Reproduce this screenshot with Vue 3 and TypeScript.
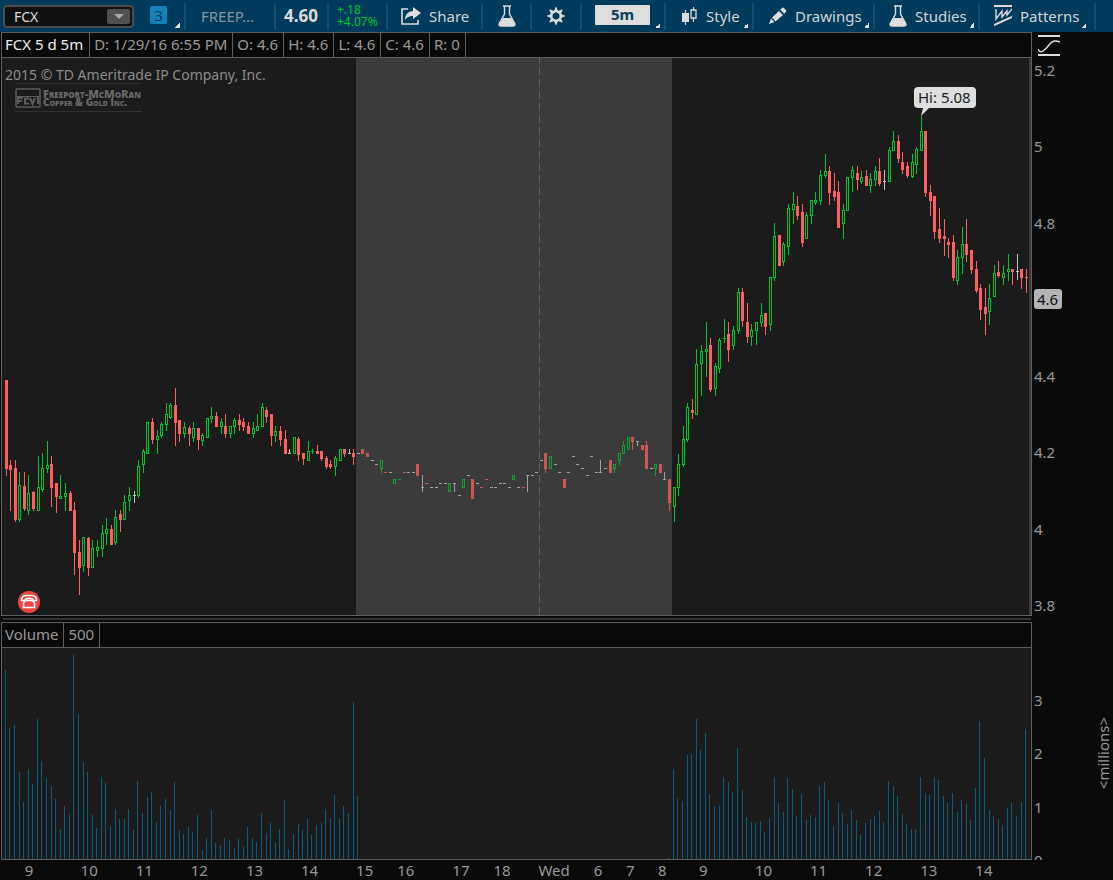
<script setup lang="ts">
import { ref } from 'vue'

type Kind = 'up' | 'down' | 'flat'
type Row = [number, string, number, number, number, number]

const symbol = ref('FCX')

const priceInfo = ['D: 1/29/16 6:55 PM', 'O: 4.6', 'H: 4.6', 'L: 4.6', 'C: 4.6', 'R: 0']
const priceTicks = ['5.2', '5', '4.8', '4.6', '4.4', '4.2', '4', '3.8']
const volumeTicks = ['3', '2', '1', '0']

const plot = { x: 2, width: 1029, priceY: 58, priceHeight: 557, volumeY: 648, volumeHeight: 211 }
const afterHours = { from: 356, to: 672 }

const timeTicks: [string, number][] = [
  ['9', 30], ['10', 90], ['11', 145], ['12', 200], ['13', 255], ['14', 310], ['15', 365],
  ['16', 406], ['17', 461], ['18', 502], ['Wed', 554], ['6', 598], ['7', 630], ['8', 662],
  ['9', 703], ['10', 763], ['11', 818], ['12', 873], ['13', 928], ['14', 983],
]

// x, kind, high, body top, body bottom, low (plot units)
const rows: Row[] = [
  [6, 'R', 380, 380, 469, 476], [10, 'R', 460, 465, 470, 511], [15, 'R', 460, 468, 520, 522],
  [19, 'G', 472, 485, 520, 522], [24, 'R', 472, 486, 509, 511], [28, 'G', 475, 493, 511, 515],
  [33, 'R', 491, 492, 509, 511], [38, 'G', 456, 487, 511, 511], [42, 'G', 453, 468, 490, 492],
  [47, 'G', 441, 465, 469, 473], [51, 'R', 456, 464, 488, 507], [56, 'R', 483, 483, 497, 513],
  [60, 'G', 475, 496, 499, 499], [65, 'G', 483, 493, 497, 511], [70, 'R', 491, 493, 511, 511],
  [74, 'R', 502, 510, 553, 575], [79, 'R', 540, 552, 568, 595], [83, 'G', 537, 537, 566, 572],
  [88, 'R', 537, 538, 568, 576], [92, 'G', 540, 548, 568, 568], [97, 'G', 540, 547, 551, 557],
  [102, 'G', 525, 533, 549, 557], [106, 'G', 518, 529, 534, 545], [111, 'R', 525, 529, 545, 545],
  [115, 'G', 510, 517, 543, 545], [120, 'R', 510, 514, 520, 532], [124, 'G', 495, 502, 520, 520],
  [129, 'G', 487, 495, 501, 511], [134, 'W', 491, 495, 496, 503], [138, 'G', 460, 466, 496, 498],
  [143, 'G', 449, 451, 465, 473], [147, 'G', 422, 422, 454, 454], [152, 'R', 418, 422, 440, 444],
  [157, 'G', 430, 436, 440, 454], [161, 'G', 422, 424, 436, 438], [166, 'G', 403, 414, 425, 431],
  [170, 'G', 403, 405, 418, 419], [175, 'R', 388, 405, 423, 446], [179, 'R', 420, 420, 434, 442],
  [184, 'G', 422, 427, 434, 438], [189, 'R', 426, 428, 434, 446], [193, 'G', 422, 428, 438, 442],
  [198, 'R', 428, 428, 440, 450], [202, 'G', 433, 435, 441, 446], [207, 'G', 418, 418, 438, 438],
  [211, 'G', 407, 416, 419, 423], [216, 'R', 412, 416, 427, 427], [221, 'G', 418, 422, 427, 434],
  [225, 'R', 414, 426, 434, 438], [230, 'G', 426, 426, 434, 438], [234, 'G', 418, 420, 427, 434],
  [239, 'R', 414, 420, 425, 431], [243, 'R', 418, 422, 427, 431], [248, 'R', 422, 426, 434, 434],
  [253, 'G', 422, 428, 434, 438], [257, 'G', 414, 426, 431, 431], [262, 'G', 403, 407, 427, 427],
  [266, 'R', 407, 410, 417, 423], [271, 'R', 414, 414, 436, 446], [275, 'G', 426, 431, 436, 442],
  [280, 'R', 426, 431, 440, 446], [285, 'R', 430, 439, 454, 454], [289, 'W', 449, 453, 454, 454],
  [294, 'G', 437, 437, 454, 454], [298, 'R', 437, 439, 455, 461], [303, 'R', 453, 453, 459, 465],
  [308, 'G', 441, 451, 461, 461], [312, 'G', 449, 451, 452, 454], [317, 'R', 445, 451, 454, 454],
  [321, 'R', 451, 451, 459, 461], [326, 'R', 456, 458, 467, 469], [330, 'R', 460, 464, 467, 469],
  [335, 'G', 456, 458, 467, 476], [340, 'G', 449, 449, 461, 461], [344, 'R', 449, 449, 454, 457],
  [349, 'W', 449, 453, 454, 454], [353, 'R', 449, 453, 457, 465], [362, 'R', 449, 449, 454, 454],
  [367, 'R', 453, 453, 457, 457], [381, 'G', 460, 460, 469, 473], [394, 'G', 479, 479, 484, 484],
  [417, 'R', 464, 464, 476, 476], [422, 'W', 475, 487, 488, 492], [449, 'G', 483, 483, 492, 492],
  [454, 'W', 483, 483, 484, 492], [463, 'G', 479, 479, 488, 488], [472, 'R', 479, 479, 499, 499],
  [513, 'G', 475, 475, 480, 480], [527, 'W', 475, 475, 476, 492], [545, 'R', 453, 453, 469, 473],
  [550, 'G', 456, 456, 469, 469], [564, 'R', 479, 479, 488, 488], [600, 'W', 460, 472, 473, 473],
  [610, 'R', 460, 460, 473, 473], [614, 'G', 464, 464, 469, 473], [619, 'G', 453, 453, 461, 465],
  [623, 'G', 441, 445, 454, 454], [628, 'G', 437, 437, 450, 450], [632, 'R', 437, 437, 442, 450],
  [637, 'W', 441, 441, 442, 446], [642, 'R', 445, 445, 450, 450], [646, 'R', 441, 445, 469, 469],
  [655, 'G', 464, 464, 469, 476], [660, 'R', 464, 464, 473, 473], [664, 'W', 472, 479, 480, 480],
  [669, 'R', 479, 479, 503, 511], [674, 'G', 487, 487, 507, 522], [678, 'G', 454, 464, 488, 496],
  [683, 'G', 426, 439, 465, 467], [687, 'G', 403, 407, 440, 442], [692, 'R', 399, 410, 413, 419],
  [696, 'G', 349, 364, 415, 415], [701, 'G', 345, 351, 364, 396], [706, 'G', 322, 349, 352, 377],
  [710, 'R', 338, 345, 390, 392], [715, 'G', 363, 366, 389, 396], [719, 'G', 338, 340, 369, 373],
  [724, 'G', 319, 338, 339, 343], [728, 'R', 322, 334, 350, 362], [733, 'G', 326, 330, 346, 350],
  [738, 'G', 288, 292, 331, 334], [742, 'R', 288, 292, 321, 327], [747, 'R', 303, 322, 337, 343],
  [751, 'G', 324, 330, 337, 346], [756, 'G', 322, 322, 331, 345], [761, 'G', 303, 315, 323, 327],
  [765, 'R', 313, 313, 327, 335], [770, 'G', 277, 277, 325, 331], [774, 'G', 223, 236, 278, 281],
  [779, 'R', 235, 235, 266, 266], [783, 'G', 242, 244, 262, 266], [788, 'G', 204, 208, 247, 255],
  [793, 'G', 192, 204, 210, 224], [797, 'R', 196, 206, 216, 220], [802, 'R', 204, 212, 243, 247],
  [806, 'G', 212, 215, 239, 239], [811, 'G', 200, 200, 216, 224], [815, 'G', 192, 200, 203, 205],
  [820, 'G', 170, 175, 201, 205], [825, 'G', 154, 171, 176, 178], [829, 'R', 166, 171, 193, 205],
  [834, 'R', 173, 191, 197, 201], [838, 'R', 181, 192, 228, 228], [843, 'G', 204, 210, 224, 239],
  [847, 'G', 177, 177, 211, 211], [852, 'G', 166, 170, 178, 192], [857, 'R', 166, 173, 180, 190],
  [861, 'G', 171, 177, 182, 184], [866, 'R', 170, 176, 186, 186], [870, 'G', 173, 179, 186, 193],
  [875, 'G', 166, 171, 180, 186], [879, 'R', 158, 171, 184, 186], [884, 'W', 170, 181, 182, 190],
  [889, 'G', 147, 150, 182, 182], [893, 'G', 131, 141, 151, 151], [898, 'R', 135, 141, 159, 163],
  [902, 'R', 152, 162, 170, 174], [907, 'R', 162, 166, 176, 178], [912, 'G', 154, 162, 177, 178],
  [916, 'G', 147, 149, 165, 174], [921, 'G', 116, 131, 151, 151], [925, 'R', 131, 131, 193, 197],
  [930, 'R', 185, 192, 201, 216], [934, 'R', 196, 196, 232, 239], [939, 'R', 208, 229, 239, 243],
  [944, 'R', 219, 236, 239, 256], [948, 'R', 238, 242, 245, 258], [953, 'R', 235, 242, 278, 281],
  [957, 'G', 250, 257, 281, 285], [962, 'G', 227, 244, 258, 274], [966, 'R', 219, 244, 255, 262],
  [971, 'R', 250, 250, 270, 274], [976, 'R', 261, 269, 291, 293], [980, 'R', 284, 288, 310, 320],
  [985, 'R', 288, 307, 314, 335], [989, 'G', 284, 298, 312, 325], [994, 'G', 265, 273, 297, 297],
  [998, 'R', 261, 272, 276, 278], [1003, 'G', 265, 273, 278, 285], [1008, 'G', 254, 269, 272, 281],
  [1012, 'R', 269, 269, 272, 285], [1017, 'W', 254, 271, 272, 280], [1021, 'R', 269, 269, 278, 289],
  [1026, 'R', 269, 277, 278, 293],
]

// bars whose four prices are equal: x, kind, y
const ticks: [number, string, number][] = [
  [358, 'W', 453], [372, 'W', 460], [376, 'W', 464], [385, 'R', 472], [390, 'W', 472],
  [399, 'G', 479], [404, 'R', 472], [408, 'W', 472], [413, 'W', 472], [426, 'R', 483],
  [431, 'W', 487], [436, 'W', 487], [440, 'W', 483], [445, 'W', 483], [459, 'W', 495],
  [468, 'W', 475], [477, 'W', 483], [481, 'R', 487], [486, 'R', 479], [491, 'W', 487],
  [495, 'W', 487], [500, 'W', 483], [504, 'W', 483], [509, 'W', 487], [518, 'W', 487],
  [523, 'R', 487], [532, 'W', 475], [536, 'W', 472], [541, 'W', 460], [555, 'W', 464],
  [559, 'W', 472], [568, 'W', 472], [573, 'W', 456], [577, 'W', 464], [582, 'W', 468],
  [587, 'W', 475], [591, 'W', 456], [596, 'W', 472], [605, 'W', 468], [651, 'W', 468],
]

const kinds: Record<string, Kind> = { R: 'down', G: 'up', W: 'flat' }

const candles = [
  ...rows,
  ...ticks.map(([x, k, y]): Row => [x, k, y, y, y + 1, y + 1]),
].map(([x, k, high, top, bottom, low]) => ({
  x,
  high,
  top,
  bottom,
  low,
  hollow: k === 'G' && bottom - top > 1,
  classes: [kinds[k], { dim: x >= afterHours.from && x < afterHours.to }],
}))

const volume: [number, number][] = [
  [5, 670], [9, 728], [14, 725], [19, 772], [23, 802], [28, 769], [32, 784], [37, 719], [41, 761],
  [46, 778], [51, 786], [55, 799], [60, 829], [64, 806], [69, 815], [73, 655], [78, 714], [83, 762],
  [87, 772], [92, 815], [96, 828], [101, 777], [105, 783], [110, 826], [115, 809], [119, 819],
  [124, 819], [128, 809], [133, 830], [137, 781], [142, 813], [147, 797], [151, 792], [156, 822],
  [160, 806], [165, 799], [170, 810], [174, 782], [179, 830], [183, 834], [188, 827], [192, 832],
  [197, 815], [202, 850], [206, 838], [211, 810], [215, 843], [220, 845], [224, 838], [229, 840],
  [234, 848], [238, 839], [243, 847], [247, 827], [252, 838], [256, 842], [261, 813], [266, 833],
  [270, 823], [275, 843], [279, 829], [284, 800], [288, 849], [293, 834], [298, 824], [302, 830],
  [307, 819], [311, 835], [316, 825], [321, 823], [325, 809], [330, 818], [334, 795], [339, 819],
  [343, 806], [348, 813], [353, 702], [357, 796], [668, 857], [673, 769], [677, 799], [682, 801],
  [687, 755], [691, 754], [696, 719], [700, 750], [705, 733], [709, 794], [714, 806], [719, 806],
  [723, 777], [728, 782], [732, 792], [737, 748], [742, 790], [746, 817], [751, 822], [755, 823],
  [760, 821], [764, 832], [769, 818], [774, 777], [778, 803], [783, 812], [787, 778], [792, 789],
  [796, 816], [801, 794], [806, 820], [810, 815], [815, 817], [819, 786], [824, 782], [828, 800],
  [833, 826], [838, 803], [842, 813], [847, 824], [851, 810], [856, 820], [860, 835], [865, 823],
  [870, 819], [874, 816], [879, 811], [883, 822], [888, 781], [893, 786], [897, 796], [902, 814],
  [906, 824], [911, 829], [915, 829], [920, 777], [925, 793], [929, 795], [934, 777], [938, 780],
  [943, 796], [947, 803], [952, 793], [957, 812], [961, 800], [966, 804], [970, 820], [975, 788],
  [979, 721], [984, 758], [989, 810], [993, 816], [998, 819], [1002, 825], [1007, 808],
  [1011, 803], [1016, 816], [1021, 802], [1025, 729],
]

const leftOf = (x: number) => `${((x - plot.x) / plot.width) * 100}%`
const topOf = (y: number) => `${((y - plot.priceY) / plot.priceHeight) * 100}%`
const high = { left: leftOf(921), top: topOf(116) }
</script>

<template>
  <div class="app">
    <header class="toolbar">
      <div class="section symbol-section">
        <div class="symbol-box">
          <input v-model="symbol" class="symbol-input" type="text" aria-label="Symbol" />
          <button class="symbol-drop" type="button" aria-label="Choose symbol">
            <svg width="10" height="6" viewBox="0 0 10 6"><path d="M0 0h10L5 5z" fill="#a8a8a8" /></svg>
          </button>
        </div>
        <button class="link-badge" type="button" aria-label="Link group 3">3</button>
        <i class="corner"></i>
      </div>
      <div class="section company">FREEP...</div>
      <div class="section last">4.60</div>
      <div class="section change"><span>+.18</span><span>+4.07%</span></div>
      <button class="section tool share" type="button">
        <svg width="20" height="18" viewBox="0 0 20 18">
          <path d="M7 2H1v15h16v-4" fill="none" stroke="#d8dde0" stroke-width="1.6" />
          <path d="M12 0l8 6-8 6V9C8 9 6 10 4 13c0-5 3-9 8-9z" fill="#dddddd" />
        </svg>
        Share
      </button>
      <button class="section tool center" type="button" aria-label="Lab">
        <svg width="18" height="22" viewBox="0 0 18 22">
          <path d="M5 1h8M6.500 1v8L1.500 18Q0 21 3 21h12q3 0 1.500-3L11.500 9V1" fill="none" stroke="#d8dde0" stroke-width="1.400" />
          <path d="M5 13h8l4 6q0 2-2 2H3q-2 0-2-2z" fill="#dddddd" />
        </svg>
      </button>
      <button class="section tool center" type="button" aria-label="Settings">
        <svg width="18" height="18" viewBox="-9 -9 18 18">
          <path v-for="n in 8" :key="n" d="M-1.600-5L0-8.800L1.600-5z" :transform="`rotate(${n * 45})`" fill="#dddddd" stroke="#dddddd" stroke-width="0.800" />
          <circle r="4.700" fill="none" stroke="#dddddd" stroke-width="2.200" />
        </svg>
      </button>
      <button class="section tool period" type="button" aria-label="Time period 5m">
        <span class="period-tag">5m</span>
        <i class="corner"></i>
      </button>
      <button class="section tool style-tool" type="button">
        <svg width="15" height="18" viewBox="0 0 15 18">
          <path d="M3.500 3v15M11.500 0v3m0 8v4" stroke="#dddddd" stroke-width="1.200" />
          <path d="M0 6h7v9H0z" fill="#dddddd" />
          <path d="M9 3h5v8H9z" fill="none" stroke="#dddddd" stroke-width="1.300" />
        </svg>
        Style
        <i class="corner"></i>
      </button>
      <button class="section tool drawings" type="button">
        <svg width="18" height="18" viewBox="0 0 18 18">
          <path d="M3 10.500L10 4l4 4-7.500 6.500zM0 17l2-5.500 3.500 3.500zM11.200 2.800L13 1q1-1 2.500.5l1 1q1.500 1.500.5 2.500l-1.800 1.800z" fill="#dddddd" />
        </svg>
        Drawings
        <i class="corner"></i>
      </button>
      <button class="section tool studies" type="button">
        <svg width="18" height="22" viewBox="0 0 18 22">
          <path d="M5 1h8M6.500 1v8L1.500 18Q0 21 3 21h12q3 0 1.500-3L11.500 9V1" fill="none" stroke="#d8dde0" stroke-width="1.400" />
          <path d="M5 13h8l4 6q0 2-2 2H3q-2 0-2-2z" fill="#dddddd" />
        </svg>
        Studies
        <i class="corner"></i>
      </button>
      <div class="section patterns-section">
        <button class="tool patterns" type="button">
          <svg width="18" height="21" viewBox="0 0 18 21">
            <path d="M0 1h18M0 20l18-8" stroke="#dddddd" stroke-width="2" />
            <path d="M2 4v10l6-8v6l5-6v4l5-6" fill="none" stroke="#dddddd" stroke-width="1.400" />
          </svg>
          Patterns
          <i class="corner"></i>
        </button>
      </div>
    </header>

    <main class="workspace">
      <section class="panel">
        <div class="info">
          <span class="cell title">FCX 5 d 5m</span>
          <span v-for="item in priceInfo" :key="item" class="cell">{{ item }}</span>
        </div>
        <div class="plot">
          <svg class="canvas" :viewBox="`${plot.x} ${plot.priceY} ${plot.width} ${plot.priceHeight}`" preserveAspectRatio="none">
            <rect class="after-hours" :x="afterHours.from" :y="plot.priceY" :width="afterHours.to - afterHours.from" :height="plot.priceHeight" />
            <path class="day-break" d="M539.500 55V616" />
            <g v-for="c in candles" :key="c.x" :class="c.classes">
              <rect v-if="c.top > c.high" :x="c.x" :y="c.high" width="1" :height="c.top - c.high" />
              <rect v-if="c.low > c.bottom" :x="c.x" :y="c.bottom" width="1" :height="c.low - c.bottom" />
              <path v-if="c.hollow" class="hollow" :d="`M${c.x - 0.5} ${c.top + 0.5}h2v${c.bottom - c.top - 1}h-2z`" />
              <rect v-else :x="c.x - 1" :y="c.top" width="3" :height="c.bottom - c.top" />
            </g>
            <rect class="gutter" :x="1029" :y="plot.priceY" width="2" :height="plot.priceHeight" />
          </svg>
          <div class="branding">
            <p class="copyright">2015 © TD Ameritrade IP Company, Inc.</p>
            <div class="logo">
              <svg width="26" height="20" viewBox="0 0 26 20">
                <g fill="none" stroke="#5c5c5c">
                  <rect x="1" y="1" width="24" height="18" rx="1" stroke-width="1.500" />
                  <path d="M1 8.500h24" />
                  <path d="M3 16v-6h5M3 13h4M14 10.500h-4v5h4M15 10l2.500 6 2.500-6M23 9v7" stroke-width="2" />
                </g>
              </svg>
              <div class="logo-name"><span>Freeport-McMoRan</span><span class="second">Copper &amp; Gold Inc.</span></div>
            </div>
          </div>
          <div class="callout" :style="high">
            <span class="callout-text">Hi: 5.08</span>
            <svg class="pointer" width="8" height="8" viewBox="0 0 8 8"><path d="M2 0h6L0 8z" fill="#dedede" /></svg>
          </div>
          <button class="phone" type="button" aria-label="Earnings call">
            <svg width="22" height="22" viewBox="0 0 22 22">
              <circle cx="11" cy="11" r="11" fill="#f04444" />
              <g fill="none" stroke="#ffffff" stroke-width="1.600">
                <path d="M3.500 9.500V8q1-3.500 5-3.500h5q4 0 5 3.500v1.500h-3q-1.500-2-3-2h-3q-1.500 0-3 2z" />
                <path d="M5.500 16.500V12q1-2.500 3.500-2.500h4q2.500 0 3.500 2.500v4.500z" />
              </g>
            </svg>
          </button>
        </div>
      </section>

      <aside class="price-axis">
        <button class="scale" type="button" aria-label="Scale settings">
          <svg width="22" height="22" viewBox="0 0 22 22">
            <path d="M0 1h22M0 20h22" stroke="#dddddd" stroke-width="2" />
            <path d="M0 14q2 4 5 2t6-6 6-4 5 1" fill="none" stroke="#dddddd" stroke-width="1.500" />
          </svg>
        </button>
        <ul class="scale-labels">
          <li v-for="t in priceTicks" :key="t"><span :class="{ current: t === '4.6' }">{{ t }}</span></li>
        </ul>
      </aside>

      <div class="divider"></div>

      <section class="panel">
        <div class="info">
          <span class="cell volume-name">Volume</span>
          <span class="cell">500</span>
        </div>
        <div class="plot">
          <svg class="canvas" :viewBox="`${plot.x} ${plot.volumeY} ${plot.width} ${plot.volumeHeight}`" preserveAspectRatio="none">
            <rect v-for="[x, y] in volume" :key="x" class="bar" :x="x" :y="y" width="1" :height="859 - y" />
          </svg>
        </div>
      </section>

      <aside class="volume-axis">
        <ul class="scale-labels">
          <li v-for="t in volumeTicks" :key="t">{{ t }}</li>
        </ul>
        <span class="unit">&lt;millions&gt;</span>
      </aside>

      <div class="time-axis">
        <span v-for="[label, x] in timeTicks" :key="x" class="time" :style="{ left: leftOf(x) }">{{ label }}</span>
      </div>
    </main>
  </div>
</template>

<style>
body {
  margin: 0;
  background: #0a0a0a;
}
</style>

<style scoped>
.app {
  display: flex;
  flex-direction: column;
  min-height: 100vh;
  font: 15px/20px 'Noto Sans', 'Open Sans', sans-serif;
  color: #999999;
  background: #0a0a0a;
}
button,
input {
  margin: 0;
  padding: 0;
  border: 0;
  background: none;
  font: inherit;
  color: inherit;
}
.toolbar {
  display: flex;
  flex: none;
  height: 32px;
  background: #003a5c;
  white-space: nowrap;
}
.section {
  position: relative;
  box-sizing: border-box;
  display: flex;
  flex: none;
  align-items: center;
  border-right: 2px solid #164c6e;
  margin: 3px 0 2px;
  height: 27px;
  color: #d0d6da;
}
.corner {
  position: absolute;
  right: 4px;
  bottom: 2px;
  width: 5px;
  height: 5px;
  background: linear-gradient(135deg, transparent 50%, #e0e0e0 50%);
}
.symbol-section {
  width: 186px;
  padding-left: 3px;
  gap: 16px;
}
.symbol-box {
  box-sizing: border-box;
  display: flex;
  align-items: center;
  width: 131px;
  height: 23px;
  padding: 0 2px 0 9px;
  border: 2px solid #4c4c4c;
  border-radius: 4px;
  background: #101010;
}
.symbol-input {
  flex: 1;
  min-width: 0;
  height: 19px;
  font-size: 14px;
  color: #dddddd;
}
.symbol-drop {
  display: flex;
  align-items: center;
  justify-content: center;
  width: 23px;
  height: 15px;
  border-radius: 2px;
  background: #505050;
}
.link-badge {
  width: 17px;
  height: 18px;
  margin-bottom: 3px;
  border-radius: 2px;
  background: #1382b8;
  color: #0a3450;
  font-size: 15px;
  line-height: 17px;
}
.company {
  width: 90px;
  padding-left: 15px;
  font-size: 15px;
  color: #8094a2;
}
.last {
  width: 53px;
  padding-left: 8px;
  font-size: 17px;
  font-weight: 700;
  color: #dddddd;
}
.change {
  flex-direction: column;
  justify-content: center;
  align-items: flex-start;
  width: 59px;
  padding-left: 8px;
  font-size: 12px;
  line-height: 12px;
  color: #00c22c;
}
.company,
.last,
.change {
  padding-bottom: 1px;
}
.tool {
  gap: 8px;
  padding-bottom: 2px;
  font-size: 15px;
}
.share {
  width: 95px;
  padding-left: 13px;
}
.center {
  justify-content: center;
  width: 49px;
}
.center + .center {
  width: 50px;
}
.period {
  width: 84px;
  padding-left: 13px;
}
.period-tag {
  width: 55px;
  height: 20px;
  margin-bottom: 1px;
  border-radius: 1px;
  background: #dddddd;
  color: #0a3c5c;
  font-weight: 700;
  line-height: 19px;
  text-align: center;
}
.style-tool {
  width: 88px;
  padding-left: 16px;
  gap: 9px;
}
.drawings {
  width: 121px;
  padding-left: 15px;
}
.studies {
  width: 105px;
  padding-left: 14px;
}
.patterns-section {
  width: 116px;
  padding-right: 4px;
}
.patterns {
  position: relative;
  box-sizing: border-box;
  display: flex;
  align-items: center;
  width: 100%;
  height: 100%;
  padding-left: 14px;
}
.workspace {
  flex: 1;
  display: grid;
  grid-template-columns: minmax(0, 1fr) 81px;
  grid-template-rows: minmax(0, 584fr) 6px minmax(0, 238fr) 20px;
}
.panel {
  display: flex;
  flex-direction: column;
  min-height: 0;
  margin-left: 1px;
  border: 1px solid #5e5e5e;
}
.info {
  display: flex;
  flex: none;
  height: 24px;
  border-bottom: 1px solid #5e5e5e;
  line-height: 22px;
  white-space: nowrap;
}
.cell {
  padding: 0 5px 0 4px;
  border-right: 1px solid #5e5e5e;
}
.title {
  padding: 0 6px 0 3px;
  color: #eeeeee;
}
.volume-name {
  padding-left: 3px;
}
.plot {
  position: relative;
  flex: 1;
  min-height: 0;
  background: #1b1b1b;
}
.canvas {
  position: absolute;
  inset: 0;
  width: 100%;
  height: 100%;
  shape-rendering: crispEdges;
}
.after-hours {
  fill: #3b3b3b;
}
.day-break {
  stroke: #606060;
  stroke-dasharray: 8 4;
}
.gutter {
  fill: #3c3c3c;
}
.up {
  fill: #00c531;
  stroke: none;
}
.hollow {
  fill: none;
  stroke: #00c531;
}
.down {
  fill: #ff5f5f;
}
.flat {
  fill: #c4c4c4;
}
.dim {
  opacity: 0.75;
}
.bar {
  fill: #0b5a80;
}
.branding {
  position: relative;
  padding: 8px 3px;
}
.copyright {
  margin: 0;
  font-size: 14px;
  line-height: 17px;
  color: #8c8c8c;
}
.logo {
  display: flex;
  align-items: center;
  gap: 2px;
  width: 127px;
  height: 27px;
  margin-left: 10px;
  border-top: 1px solid #2c2c2c;
  border-bottom: 1px solid #333333;
  color: #686868;
  white-space: nowrap;
}
.logo-name {
  display: flex;
  flex-direction: column;
  font-family: 'Open Sans', sans-serif;
  font-size: 11px;
  line-height: 9px;
  font-weight: 800;
  font-variant: small-caps;
}
.second {
  font-size: 10px;
}
.callout {
  position: absolute;
}
.callout-text {
  position: absolute;
  left: -7px;
  bottom: 8px;
  padding: 0 5px 0 4px;
  border-radius: 4px;
  background: #dedede;
  color: #222222;
  line-height: 21px;
  white-space: nowrap;
}
.pointer {
  position: absolute;
  left: 0;
  bottom: 0;
}
.phone {
  position: absolute;
  left: 16px;
  bottom: 2px;
  width: 22px;
  height: 22px;
}
.phone svg {
  display: block;
}
.price-axis {
  display: flex;
  flex-direction: column;
  padding-left: 2px;
}
.scale {
  height: 28px;
  width: 30px;
  padding: 3px 4px;
  box-sizing: border-box;
}
.scale svg {
  display: block;
}
.scale-labels {
  display: flex;
  flex: 1;
  flex-direction: column;
  justify-content: space-between;
  margin: 0 0 1px;
  padding: 0;
  list-style: none;
}
.current {
  display: inline-block;
  padding: 0 4px 0 3px;
  border-radius: 3px;
  background: #b4b4b4;
  color: #111111;
}
.divider {
  grid-column: 1 / -1;
  height: 2px;
  margin: 2px 82px 0 3px;
  background: #333333;
}
.volume-axis {
  display: flex;
  overflow: hidden;
  padding-left: 2px;
}
.volume-axis .scale-labels {
  margin: 68px 0 -10px;
}
.unit {
  align-self: center;
  writing-mode: vertical-rl;
  transform: rotate(180deg);
  margin-top: 24px;
}
.time-axis {
  position: relative;
  margin-left: 1px;
}
.time {
  position: absolute;
  top: 1px;
  line-height: 19px;
  transform: translateX(-50%);
}
</style>
